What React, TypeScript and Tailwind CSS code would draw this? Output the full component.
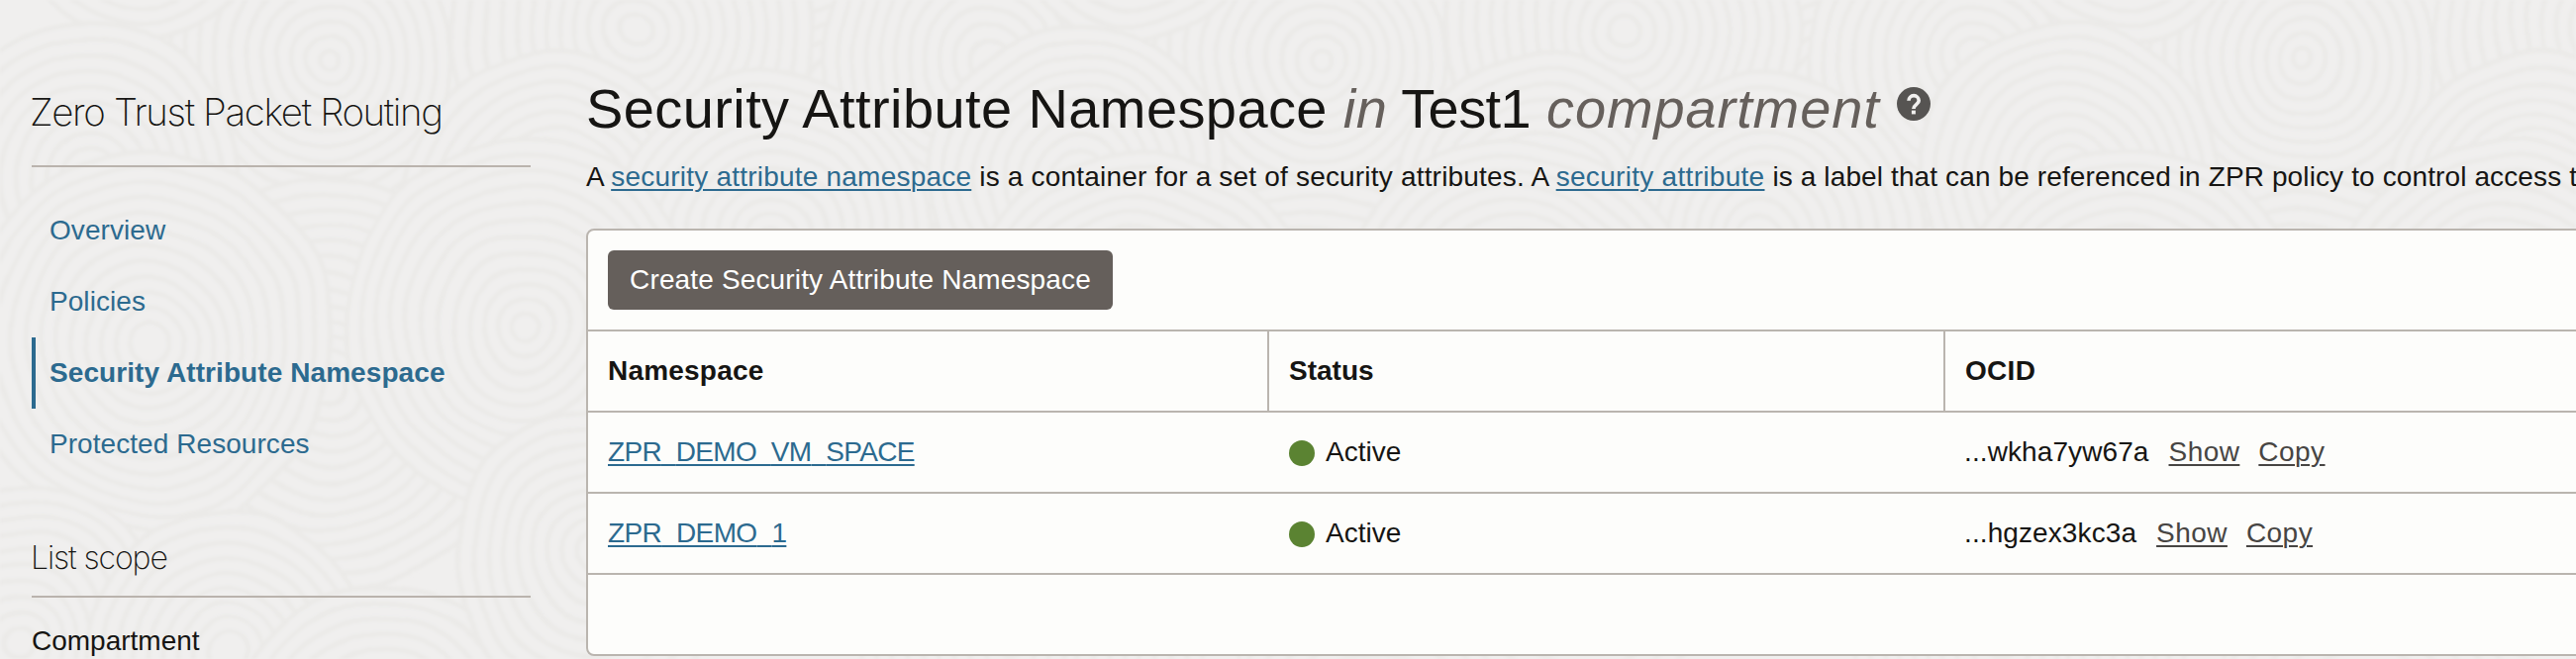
import React from "react";

type Swirl = { x: number; y: number; r: number };

const tile: Swirl[] = [
  { x: 880, y: 130, r: 190 },
  { x: 470, y: -60, r: 210 },
  { x: 330, y: 60, r: 190 },
  { x: 1000, y: 60, r: 170 },
  { x: 640, y: 30, r: 180 },
  { x: 145, y: -90, r: 126 },
  { x: 560, y: 210, r: 150 },
  { x: 780, y: 240, r: 160 },
  { x: 90, y: 180, r: 150 },
  { x: 330, y: 390, r: 200 },
  { x: 530, y: 330, r: 180 },
  { x: 150, y: 345, r: 185 },
  { x: 20, y: 650, r: 150 },
  { x: 230, y: 660, r: 140 },
  { x: 390, y: 760, r: 160 },
  { x: 600, y: 560, r: 140 },
];

const offsets = [0, 1000, 2000];

function ringsOf(r: number) {
  const rings: number[] = [];
  for (let v = r; v > 8; v -= 15) rings.push(v);
  return rings;
}

function Backdrop() {
  return (
    <svg className="absolute inset-0 h-full w-full" viewBox="0 0 2602 666" aria-hidden="true">
      <filter id="sand" x="0" y="0" width="100%" height="100%" filterUnits="userSpaceOnUse">
        <feTurbulence type="fractalNoise" baseFrequency="0.008" numOctaves="2" seed="4" result="noise" />
        <feDisplacementMap in="SourceGraphic" in2="noise" scale="18" xChannelSelector="R" yChannelSelector="G" />
        <feGaussianBlur stdDeviation="1.6" />
      </filter>
      <g filter="url(#sand)">
        {offsets.map((dx) =>
          tile.map((s, i) => (
            <g key={`${dx}-${i}`} fill="#f0efee" stroke="#ebeae8" strokeWidth="5">
              {ringsOf(s.r).map((r) => (
                <ellipse key={r} cx={s.x + dx} cy={s.y} rx={r} ry={r * 1.04} />
              ))}
            </g>
          )),
        )}
      </g>
    </svg>
  );
}

const link = "text-[#2c6a8f] underline decoration-[#2c6a8f] decoration-2 underline-offset-[3px]";
const action = "tracking-[0.45px] text-[#474543] underline decoration-2 underline-offset-[3px]";

const navItems = [
  { label: "Overview", active: false },
  { label: "Policies", active: false },
  { label: "Security Attribute Namespace", active: true },
  { label: "Protected Resources", active: false },
];

const rows = [
  { name: "ZPR_DEMO_VM_SPACE", tracking: "tracking-[-0.7px]", status: "Active", ocid: "...wkha7yw67a" },
  { name: "ZPR_DEMO_1", tracking: "tracking-[-0.64px]", status: "Active", ocid: "...hgzex3kc3a" },
];

function NamespaceLink({ name, tracking }: { name: string; tracking: string }) {
  return (
    <a className={`${link} ${tracking} [text-decoration-skip-ink:none]`}>
      {name.split("_").map((part, i) => (
        <React.Fragment key={i}>
          {i > 0 && <span className="text-transparent">_</span>}
          {part}
        </React.Fragment>
      ))}
    </a>
  );
}

function Sidebar() {
  return (
    <aside className="ml-8 w-[504px] shrink-0 pt-[89px]">
      <h2 className="h-20 border-b-2 border-[#bab3ad] font-['Inter'] text-[38.5px] leading-[48px] font-extralight tracking-[-1.36px] whitespace-nowrap">
        <span className="-ml-0.5">Zero Trust Packet Routing</span>
      </h2>
      <nav className="mt-7">
        {navItems.map((item) => (
          <a
            key={item.label}
            className={
              item.active
                ? "flex h-[72px] items-center border-l-4 border-[#2c6a8f] pl-[14px] font-bold tracking-[0.08px] text-[#2c6a8f]"
                : "flex h-[72px] items-center pl-[18px] tracking-[0.06px] text-[#2c6a8f]"
            }
          >
            {item.label}
          </a>
        ))}
      </nav>
      <h3 className="mt-[59px] h-[60px] border-b-2 border-[#bab3ad] font-['Inter'] text-[32px] leading-10 font-extralight tracking-[-1.1px]">
        <span className="-ml-px">List scope</span>
      </h3>
      <div className="mt-6 leading-10">Compartment</div>
    </aside>
  );
}

function HelpIcon() {
  return (
    <svg className="mt-[10px] ml-[17px] h-[34px] w-[34px]" viewBox="0 0 34 34">
      <circle cx="17" cy="17" r="17" fill="#565452" />
      <path d="M12 13.8a5.1 5.1 0 0 1 10.2 0c0 3.8-5.3 4-5.3 8.2" fill="none" stroke="#f0efee" strokeWidth="3.7" />
      <rect x="14.9" y="23.6" width="4" height="3.8" fill="#f0efee" />
    </svg>
  );
}

export default function App() {
  return (
    <div className="relative h-[666px] w-[2602px] overflow-hidden bg-[#f0efee] font-['Liberation_Sans',Arial,sans-serif] text-[28px] text-[#161513]">
      <Backdrop />
      <div className="relative flex">
        <Sidebar />
        <main className="ml-14 w-[2200px] shrink-0 pt-[78px]">
          <div className="flex h-16">
            <h1 className="text-[56px] leading-[64px] tracking-[0.4px] whitespace-nowrap">
              Security Attribute Namespace <em className="text-[#66605c]">in</em>{" "}
              <span className="-ml-0.5 tracking-[-0.6px]">Test1</span>{" "}
              <em className="tracking-[0.9px] text-[#66605c]">compartment</em>
            </h1>
            <HelpIcon />
          </div>
          <p className="mt-[17px] leading-10 tracking-[0.12px] whitespace-nowrap">
            A <a className={`${link} tracking-[0.22px]`}>security attribute namespace</a>
            <span className="tracking-[0.19px]"> is a container for a set of security attributes. A </span>
            <a className={`${link} tracking-[0.3px]`}>security attribute</a> is a label that can be referenced in ZPR
            policy to control access to
          </p>
          <section className="mt-8 h-[432px] rounded-lg border-2 border-[#bab5af] bg-[#fdfdfb]">
            <div className="h-[102px] border-b-2 border-[#bab5af] px-5 pt-5">
              <button className="h-[60px] w-[510px] rounded-md bg-[#655f5b] tracking-[0.15px] whitespace-nowrap text-white">
                Create Security Attribute Namespace
              </button>
            </div>
            <div className="flex h-[82px] border-b-2 border-[#bab5af] font-bold">
              <div className="flex w-[688px] items-center border-r-2 border-[#bab5af] pl-5 tracking-[0.2px]">
                Namespace
              </div>
              <div className="flex w-[683px] items-center border-r-2 border-[#bab5af] pl-5">Status</div>
              <div className="flex items-center pl-5 tracking-[0.3px]">OCID</div>
            </div>
            {rows.map((row) => (
              <div key={row.name} className="flex h-[82px] border-b-2 border-[#bab5af]">
                <div className="flex w-[688px] items-center pl-5">
                  <NamespaceLink name={row.name} tracking={row.tracking} />
                </div>
                <div className="flex w-[683px] items-center gap-[11px] pl-5">
                  <span className="mt-0.5 h-[26px] w-[26px] rounded-full bg-[#5b8332]" />
                  {row.status}
                </div>
                <div className="flex items-center gap-5 pl-5">
                  <span className="-ml-px tracking-[0.1px]">{row.ocid}</span>
                  <a className={action}>Show</a>
                  <a className={`${action} -ml-px`}>Copy</a>
                </div>
              </div>
            ))}
          </section>
        </main>
      </div>
    </div>
  );
}
